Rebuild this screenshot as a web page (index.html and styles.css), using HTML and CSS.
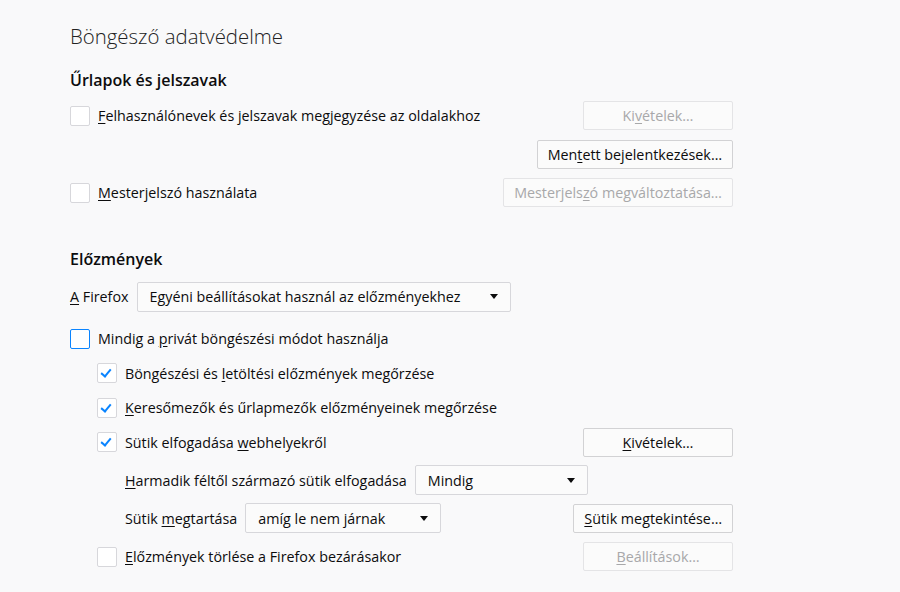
FILE: index.html
```html
<!DOCTYPE html>
<html>

<head>
  <meta charset="utf-8">
  <title>Böngésző adatvédelme</title>
  <link rel="stylesheet" href="styles.css">
</head>

<body>
  <div class="pane">
    <h1 class="title">Böngésző adatvédelme</h1>

    <h2>Űrlapok és jelszavak</h2>
    <div class="row">
      <span class="check"></span>
      <span class="label"><u>F</u>elhasználónevek és jelszavak megjegyzése az oldalakhoz</span>
      <button type="button" class="wide" disabled>Ki<u>v</u>ételek…</button>
    </div>
    <div class="row">
      <button type="button">Men<u>t</u>ett bejelentkezések…</button>
    </div>
    <div class="row">
      <span class="check"></span>
      <span class="label"><u>M</u>esterjelszó használata</span>
      <button type="button" disabled>Mesterjels<u>z</u>ó megváltoztatása…</button>
    </div>

    <h2 class="history">Előzmények</h2>
    <div class="row mode">
      <span class="plain"><u>A</u> Firefox</span>
      <div class="select big">Egyéni beállításokat használ az előzményekhez<span class="arrow"></span></div>
    </div>
    <div class="row tight first">
      <span class="check focus"></span>
      <span class="label">Mindig a <u>p</u>rivát böngészési módot használja</span>
    </div>
    <div class="row tight indent">
      <span class="check on"></span>
      <span class="label">Böngészési és <u>l</u>etöltési előzmények megőrzése</span>
    </div>
    <div class="row tight indent">
      <span class="check on"></span>
      <span class="label"><u>K</u>eresőmezők és űrlapmezők előzményeinek megőrzése</span>
    </div>
    <div class="row tight indent">
      <span class="check on"></span>
      <span class="label">Sütik elfogadása <u>w</u>ebhelyekről</span>
      <button type="button" class="wide"><u>K</u>ivételek…</button>
    </div>
    <div class="row indent2">
      <span class="plain"><u>H</u>armadik féltől származó sütik elfogadása</span>
      <div class="select small">Mindig<span class="arrow"></span></div>
    </div>
    <div class="row indent2">
      <span class="plain">Sütik <u>m</u>egtartása</span>
      <div class="select mid">amíg le nem járnak<span class="arrow"></span></div>
      <button type="button"><u>S</u>ütik megtekintése…</button>
    </div>
    <div class="row indent">
      <span class="check"></span>
      <span class="label"><u>E</u>lőzmények törlése a Firefox bezárásakor</span>
      <button type="button" class="wide" disabled><u>B</u>eállítások…</button>
    </div>
  </div>
</body>

</html>
```

FILE: styles.css
```css
body {
  font-family: "Open Sans", "Noto Sans", sans-serif;
  font-size: 14.3px;
  color: #0c0c0d;
  background-color: #f9f9fa;
  margin: 0;
  padding: 0;
}

.pane {
  width: 663px;
  margin-left: 70px;
}

.title {
  font-size: 20.4px;
  font-weight: 300;
  line-height: 30px;
  margin: 21px 0 0 0;
  color: #222;
}

h2 {
  font-size: 16px;
  font-weight: 600;
  line-height: 24px;
  margin: 17px 0 0 0;
}

h2.history {
  margin-top: 39px;
}

u {
  text-decoration: underline;
  text-underline-offset: 2px;
}

.row {
  display: flex;
  align-items: center;
  height: 30px;
  margin-top: 8.5px;
}

.row.mode {
  margin-top: 11px;
}

.row.tight {
  margin-top: 4.5px;
}

.row.first {
  margin-top: 12px;
}

.row.indent2 {
  margin-top: 8px;
}

.indent {
  padding-left: 27px;
}

.indent2 {
  padding-left: 55px;
}

.check {
  width: 18px;
  height: 18px;
  border: 1px solid #d7d7db;
  border-radius: 2px;
  background-color: #fff;
  margin-right: 8px;
  flex-shrink: 0;
  position: relative;
}

.check.focus {
  border-color: #0a84ff;
}

.check.on::after {
  content: "";
  position: absolute;
  left: 5px;
  top: 3px;
  width: 4px;
  height: 8px;
  border: solid #0a84ff;
  border-width: 0 2px 2px 0;
  transform: rotate(40deg);
}

.plain {
  margin-right: 8px;
}

button {
  margin-left: auto;
  height: 29px;
  min-width: 150px;
  padding: 0 10px;
  font-family: inherit;
  font-size: 14.3px;
  color: #0c0c0d;
  background-color: #fbfbfb;
  border: 1px solid #d2d2d4;
  border-radius: 2px;
}

button:disabled {
  color: #a8a8aa;
  border-color: #e4e4e6;
}

.select {
  display: flex;
  align-items: center;
  box-sizing: border-box;
  height: 30px;
  padding: 0 12px;
  background-color: #fbfbfb;
  border: 1px solid #d7d7db;
  border-radius: 2px;
}

.select.big {
  width: 374px;
}

.select.small {
  width: 173px;
}

.select.mid {
  width: 196px;
}

.arrow {
  margin-left: auto;
  width: 0;
  height: 0;
  border-left: 4.5px solid transparent;
  border-right: 4.5px solid transparent;
  border-top: 5px solid #0c0c0d;
}
```
